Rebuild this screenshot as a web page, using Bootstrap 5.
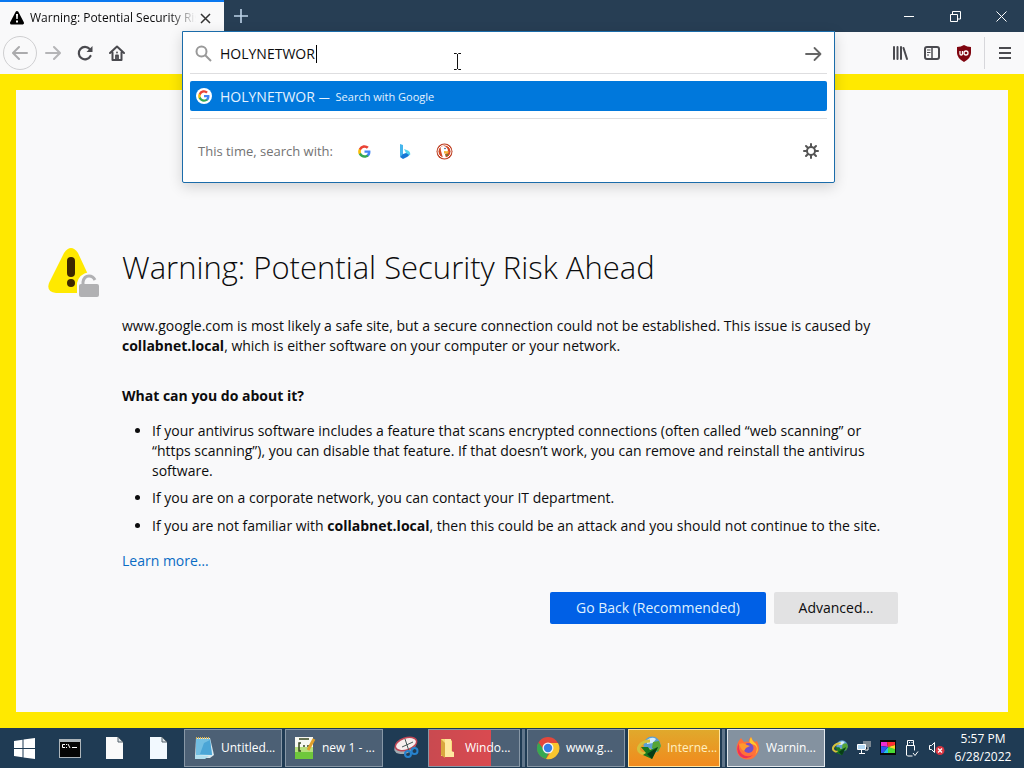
<!DOCTYPE html>
<html lang="en">
<head>
<meta charset="utf-8">
<meta name="viewport" content="width=device-width, initial-scale=1">
<title>Warning: Potential Security Risk Ahead</title>
<link href="https://cdn.jsdelivr.net/npm/bootstrap@5.3.0/dist/css/bootstrap.min.css" rel="stylesheet">
<style>
body{font-family:"Open Sans","Noto Sans",sans-serif;font-size:14px;line-height:20px;color:#0c0c0d;background:#f9f9fa}
svg{display:block;flex:none}
button{border:0;background:none;padding:0;color:inherit}
.titlebar{height:32px;background:#273e54;color:#fff}
.browser-tab{width:224px;background:#f9f9fa;border-top:2px solid #0a78f0;color:#0c0c0d;font-size:12px;padding:2px 8px 0}
.tab-title{width:166px;overflow:hidden;-webkit-mask-image:linear-gradient(90deg,#000 84%,transparent);mask-image:linear-gradient(90deg,#000 84%,transparent)}
.newtab{width:34px}
.winctl{width:46px;display:flex;justify-content:center;align-items:center}
.toolbar{height:42px;background:#f9f9fa;color:#4a4a4f}
.nav-left{width:182px;padding-left:3px}
.nav-right{width:189px;padding-right:3px}
.tool{width:32px;height:34px;display:flex;align-items:center;justify-content:center}
.back{width:34px;border-radius:50%;border:1px solid #cfcfd1;color:#ababad}
.divider{height:32px;border-left:1px solid #d7d7db}
.urlpanel{top:-1px;z-index:5;height:152px;background:#fff;border:1px solid #1b6caa;border-radius:0 0 2px 2px;padding:0 7px;box-shadow:0 4px 14px rgba(0,0,0,.16)}
.urlrow{height:42px;border-bottom:1px solid #dedee0;padding:2px 5px 0}
.urlrow input{border:0;outline:0;background:none;padding:0;font-size:14px;width:96px;color:#0c0c0d}
.caret{width:1px;height:18px;background:#000}
.result{height:30px;margin-top:7px;background:#0078dc;color:#e4f2ff;border-radius:2px;padding:0 6px;font-size:14px;width:100%}
.result span,.result small{padding-top:2px}
.result small{font-size:11px}
.engines{height:63px;margin-top:7px;border-top:1px solid #dedee0;padding:2px 8px 0;color:#737373;font-size:13px}
.engine{width:40px;display:flex;justify-content:center}
.ibeam{left:270px;top:21px}
.warnframe{background:#ffe900;padding:16px}
.warnpage{background:#f9f9fa;padding:156px 110px 86px 32px}
.warnicon{width:74px;padding-top:1px}
.warnpage h1{font-size:31px;line-height:42px;font-weight:300;margin:0 0 28px}
.warnpage p{margin:0}
.warnpage .question{margin-top:30px}
.warnpage ul{padding-left:30px;margin:15px 0}
.warnpage li+li{margin-top:8px}
.warnpage li:nth-child(2){margin-top:7px}
.warnpage a{color:#0a6cc4;text-decoration:none}
.actions{margin-top:21px}
.act{height:32px;font-size:14px;border-radius:2px}
.go{width:216px;background:#0060e6;color:#dff0ff}
.adv{width:124px;background:#e2e2e3}
.taskbar{height:40px;background:#1f3b54;color:#fff;font-size:12px}
.taskbar>*{flex-shrink:0}
.launch{width:44px;display:flex;justify-content:center}
.start{width:48px}
.snip{width:42px}
.task{height:38px;width:98px;background:#4c6075;border:1px solid #8797a6;display:flex;align-items:center;gap:6px;padding-left:8px;margin-right:3px;white-space:nowrap}
.grouped{width:92px;margin-right:7px;box-shadow:2px 0 #1f3b54,5px 0 #60758a}
.explorer{background:linear-gradient(90deg,#c94a50,#d94a50 69%,#4c6075 69%)}
.idm{background:linear-gradient(#e0a92c,#f18a1d);border-color:#ffe5a0;color:#fff0c0}
.current{background:#8492a0;border-color:#e3e9ee}
.trayicon{width:24px;display:flex;justify-content:center}
.clock{width:66px;line-height:18px;font-size:12px}
</style>
</head>
<body class="d-flex flex-column min-vh-100">
<svg width="0" height="0" class="position-absolute" aria-hidden="true">
<defs>
<symbol id="google" viewBox="0 0 24 24"><path fill="#4285f4" d="M23 12.3c0-.9-.1-1.5-.3-2.3H12v4.4h6.2c-.3 1.5-1.1 2.6-2.3 3.5v3h3.8c2.2-2.1 3.3-5 3.3-8.600z"/><path fill="#34a853" d="M12 23.500c3.100 0 5.700-1 7.700-2.800l-3.800-2.900c-1 .7-2.300 1.100-3.900 1.100-3 0-5.500-2-6.400-4.700h-4v3c2 3.800 5.900 6.300 10.400 6.300z"/><path fill="#fbbc05" d="M5.600 14.200a7 7 0 0 1 0-4.400v-3h-4a11.600 11.600 0 0 0 0 10.400z"/><path fill="#ea4335" d="M12 5.100c1.700 0 3.200.6 4.400 1.700l3.400-3.400A11.500 11.500 0 0 0 1.600 6.800l4 3C6.500 7.100 9 5.100 12 5.100z"/></symbol>
<symbol id="idmglobe" viewBox="0 0 24 24"><circle cx="15" cy="9" r="8.500" fill="#5c9fd2"/><path fill="#d8eefb" d="M10 4q5-4 9-1l-3 4-6 1z"/><path fill="#56a536" d="M16 6l6-1 2 5-3 6-6-4z"/><path fill="none" stroke="#d5c13b" stroke-width="3" d="M13 5C4 5-1 12 3 16c3 3 8 1 11-3"/><path fill="#19791f" d="M4 11h7l2 3 8-3-6 12-9-4 3-2z"/><path fill="#073d16" d="M10 18l11-7-6 12z"/></symbol>
</defs></svg>

<header>
<div class="titlebar d-flex">
<div class="browser-tab d-flex align-items-center">
<svg width="18" height="18" viewBox="0 0 18 18"><path d="M9 3.500 14.500 14H3.500z" fill="#000" stroke="#000" stroke-width="3" stroke-linejoin="round"/><path d="M8 5h2l-.3 5H8.300zM8 11.500h2v2H8z" fill="#fff"/></svg>
<span class="tab-title text-nowrap ms-1">Warning: Potential Security Risk Ahead</span>
<button class="ms-1" aria-label="Close tab"><svg width="11" height="11" viewBox="0 0 11 11" stroke="#333" stroke-width="1.500"><path d="M1 1l9 9M10 1l-9 9"/></svg></button>
</div>
<button class="newtab d-flex align-items-center justify-content-center" aria-label="New tab"><svg width="14" height="14" viewBox="0 0 14 14" stroke="#bdd3e8" stroke-width="1.600"><path d="M7 0v14M0 7h14"/></svg></button>
<div class="ms-auto d-flex">
<button class="winctl" aria-label="Minimize"><svg width="10" height="10" stroke="#fff"><path d="M0 5.500h10"/></svg></button>
<button class="winctl" aria-label="Restore"><svg width="11" height="11" fill="none" stroke="#fff"><path d="M.5 3.500h7v7h-7zM2.500 3V.5h8v7.500H8"/></svg></button>
<button class="winctl" aria-label="Close"><svg width="11" height="11" stroke="#fff"><path d="M.5.5l10 10M10.500.5l-10 10"/></svg></button>
</div>
</div>
<nav class="toolbar d-flex">
<div class="nav-left d-flex align-items-center">
<button class="tool back" aria-label="Back"><svg width="16" height="16" viewBox="0 0 16 16" fill="none" stroke="currentColor" stroke-width="2" stroke-linecap="round" stroke-linejoin="round"><path d="M15 8H1.500M7 2L1 8l6 6"/></svg></button>
<button class="tool" aria-label="Forward"><svg width="16" height="16" viewBox="0 0 16 16" fill="none" stroke="#b5b5b7" stroke-width="2" stroke-linecap="round" stroke-linejoin="round"><path d="M1 8h13.500M9 2l6 6-6 6"/></svg></button>
<button class="tool" aria-label="Reload"><svg width="16" height="16" viewBox="0 0 16 16"><path fill="none" stroke="currentColor" stroke-width="2.200" stroke-linecap="round" d="M13.500 11A6.200 6.200 0 1 1 12.700 4"/><path fill="currentColor" d="M15.500 1v6h-6z"/></svg></button>
<button class="tool" aria-label="Home"><svg width="16" height="16" viewBox="0 0 16 16" fill="none" stroke="currentColor" stroke-width="2" stroke-linecap="round" stroke-linejoin="round"><path d="M1 8l7-6.500L15 8M3.500 7.500V15h9V7.500"/><path d="M7 14v-3.500h2V14M8 7.500v.1" stroke-width="1.800"/></svg></button>
</div>
<div class="position-relative flex-grow-1">
<div class="urlpanel position-absolute start-0 end-0">
<div class="urlrow d-flex align-items-center">
<svg width="17" height="17" viewBox="0 0 17 17" fill="none" stroke="#999" stroke-width="2"><circle cx="6.500" cy="6.500" r="5"/><path d="M10 10l6 6"/></svg>
<label for="address" class="visually-hidden">Search or enter address</label>
<input id="address" type="text" value="HOLYNETWOR" class="ms-2"><span class="caret"></span>
<button class="ms-auto" aria-label="Go"><svg width="17" height="16" viewBox="0 0 17 16" fill="none" stroke="#666" stroke-width="1.800" stroke-linecap="round" stroke-linejoin="round"><path d="M1 8h14M9.500 2l6 6-6 6"/></svg></button>
</div>
<button class="result d-flex align-items-center">
<svg width="16" height="16" viewBox="0 0 16 16"><circle cx="8" cy="8" r="8" fill="#fff"/><use href="#google" x="2" y="2" width="12" height="12"/></svg>
<span class="ms-2">HOLYNETWOR</span><small class="ms-1">—&nbsp; Search with Google</small>
</button>
<div class="engines d-flex align-items-center">
<span class="me-2 pe-1">This time, search with:</span>
<button class="engine" aria-label="Google"><svg width="13" height="13"><use href="#google"/></svg></button>
<button class="engine" aria-label="Bing"><svg width="12" height="15" viewBox="0 0 12 15"><path fill="#45b6ed" d="M1 0l3 1v10L1 13z"/><path fill="#1677d5" d="M1 13l3-3 3-1 4 0q-1 3-3 4l-4 2z"/><path fill="#55d4ed" d="M5 5l4 1.500q3 2 2 5L7 9z"/></svg></button>
<button class="engine" aria-label="DuckDuckGo"><svg width="17" height="17" viewBox="0 0 17 17"><circle cx="8.500" cy="8.500" r="8" fill="#bd3d20"/><circle cx="8.500" cy="8.500" r="6.500" fill="#d34a28" stroke="#fff"/><path fill="#fff" d="M4.500 4q5-3 7.500 3l-1 3-2 1 1 4H7L5 8z"/><path fill="#f4b536" d="M8 8l5 .5-1 2H8z"/><path fill="#43933a" d="M9 12l3-1v2z"/><circle cx="9" cy="5.500" r=".8" fill="#2d4f8e"/></svg></button>
<button class="ms-auto" aria-label="Search settings"><svg width="16" height="16" viewBox="0 0 16 16" fill="none" stroke="#555" stroke-width="2"><circle cx="8" cy="8" r="4"/><path stroke-linecap="round" d="M8 1v2.500M8 12.500V15M1 8h2.500M12.500 8H15M3 3l1.800 1.800M11.200 11.200L13 13M13 3l-1.800 1.800M4.800 11.200L3 13"/></svg></button>
</div>
<svg class="ibeam position-absolute" width="9" height="17" fill="none" stroke="#111"><path d="M1 .5h2.500l1 1 1-1H8M4.500 1v15M1 16.500h2.500l1-1 1 1H8"/></svg>
</div>
</div>
<div class="nav-right d-flex align-items-center justify-content-end">
<button class="tool" aria-label="Library"><svg width="16" height="16" viewBox="0 0 16 16" fill="none" stroke="currentColor" stroke-width="2" stroke-linecap="round"><path d="M2 2v12M5.500 2v12M9 2v12M11.500 3l3.500 11"/></svg></button>
<button class="tool" aria-label="Sidebars"><svg width="16" height="16" viewBox="0 0 16 16" fill="none" stroke="currentColor"><rect x="1" y="2" width="14" height="12" rx="2" stroke-width="2"/><path d="M8 2v12" stroke-width="1.500"/><path d="M3 5h3.500M3 7.500h3.500M3 10h2"/></svg></button>
<button class="tool" aria-label="uBlock Origin"><svg width="16" height="17" viewBox="0 0 16 17"><path fill="#800610" d="M8 0q3 2 7 2v6q0 5-7 9-7-4-7-9V2q4 0 7-2z"/><path fill="none" stroke="#fff" stroke-width="1.300" d="M4 6v3q0 1 1.200 1T6.500 9V6"/><circle cx="10" cy="8" r="2" fill="none" stroke="#fff" stroke-width="1.300"/></svg></button>
<div class="divider ms-1"></div>
<button class="tool ms-1" aria-label="Menu"><svg width="12" height="12" stroke="currentColor" stroke-width="1.800"><path d="M0 1h12M0 6h12M0 11h12"/></svg></button>
</div>
</nav>
</header>

<main class="warnframe flex-grow-1 d-flex">
<section class="warnpage flex-grow-1 d-flex">
<div class="warnicon flex-shrink-0"><svg width="52" height="52" viewBox="0 0 52 52"><path fill="#ffe900" d="M16 6q7-10 14 0l14 30q3 9-6 10H8q-10-1-7-10z"/><rect x="19" y="10" width="8" height="20" rx="4" fill="#3e2800"/><circle cx="23" cy="36" r="4" fill="#3e2800"/><path fill="#f9f9fa" d="M29 52V36q2-9 12-11 12 0 11 12v15z"/><rect x="31" y="37" width="20" height="13" rx="2" fill="#b1b1b3"/><path d="M35 38v-3q1-6 6-6 4 0 6 4" fill="none" stroke="#b1b1b3" stroke-width="3"/></svg></div>
<div class="flex-grow-1">
<h1>Warning: Potential Security Risk Ahead</h1>
<p>www.google.com is most likely a safe site, but a secure connection could not be established. This issue is caused by <b>collabnet.local</b>, which is either software on your computer or your network.</p>
<p class="question"><b>What can you do about it?</b></p>
<ul>
<li>If your antivirus software includes a feature that scans encrypted connections (often called “web scanning” or “https scanning”), you can disable that feature. If that doesn’t work, you can remove and reinstall the antivirus software.</li>
<li>If you are on a corporate network, you can contact your IT department.</li>
<li>If you are not familiar with <b>collabnet.local</b>, then this could be an attack and you should not continue to the site.</li>
</ul>
<a href="#">Learn more…</a>
<div class="actions d-flex justify-content-end gap-2"><button class="act go">Go Back (Recommended)</button><button class="act adv">Advanced…</button></div>
</div>
</section>
</main>

<footer class="taskbar d-flex align-items-center">
<button class="launch start" aria-label="Start"><svg width="21" height="21" viewBox="0 0 21 21" fill="#fff"><path d="M0 3l8.500-1.200V10H0zM9.500 1.600L21 0v10H9.500zM0 11h8.500v8.200L0 18zM9.500 11H21v10L9.500 19.400z"/></svg></button>
<button class="launch" aria-label="Command Prompt"><svg width="22" height="19" viewBox="0 0 22 19"><path fill="#aeb6bb" d="M0 0h22v19H0z"/><path fill="#050505" d="M1 3h20v15H1z"/><path stroke="#fff" fill="none" d="M6 5.500H3.500v3H6M7.500 5v1M7.500 8v1M9 5l2 4M13 8.500h5"/></svg></button>
<button class="launch" aria-label="Document 1"><svg width="17" height="22" viewBox="0 0 17 22"><path fill="#fafafa" d="M0 0h12l5 5v17H0z"/><path fill="#dce2e6" stroke="#53616b" d="M12 0v5h5z"/></svg></button>
<button class="launch" aria-label="Document 2"><svg width="17" height="22" viewBox="0 0 17 22"><path fill="#f2f9ff" d="M0 0h12l5 5v17H0z"/><path fill="#dce2e6" stroke="#53616b" d="M12 0v5h5z"/></svg></button>
<button class="task ms-1"><svg width="22" height="24" viewBox="0 0 22 24"><path fill="#d8e8ef" d="M3 2h14l4 17-4 3H2z"/><path fill="#72bee2" d="M3 3h14l2 16H3z"/><path fill="#4ba5d6" d="M11 7l6-3 2 15-12-1z"/><path fill="#b2dfef" d="M2 19l14 1-4 3H2z"/><path stroke="#d5b557" stroke-width="2" stroke-dasharray="1 1" d="M3 2h14"/></svg><span>Untitled...</span></button>
<button class="task"><svg width="22" height="24" viewBox="0 0 22 24"><path fill="#f7f8f1" d="M1 1h18v22H1z"/><path fill="#6fc73b" d="M1 14h18v9H1z"/><path fill="#b6df7c" d="M1 11h18v5H1z"/><path fill="none" stroke="#36441f" stroke-width="1.500" d="M7 7H5v8h2M9 10h2M13 10h2M5 3h10"/><path stroke="#e0a02b" stroke-width="3" d="M20 3l-6 11"/></svg><span>new 1 - ...</span></button>
<button class="launch snip" aria-label="Snipping Tool"><svg width="26" height="24" viewBox="0 0 26 24"><ellipse cx="11" cy="11" rx="11" ry="6.500" transform="rotate(-18 11 11)" fill="#a3acb2"/><ellipse cx="12" cy="8" rx="11" ry="6" transform="rotate(-18 12 8)" fill="#f7eeee" stroke="#bd4555" stroke-width="1.500"/><path stroke="#455" d="M11 3l4 12M8 11l11-5"/><g fill="none" stroke="#2682ce" stroke-width="2"><circle cx="14" cy="18" r="3"/><circle cx="20.500" cy="15" r="3"/></g></svg></button>
<button class="task grouped explorer"><svg width="22" height="22" viewBox="0 0 22 22"><path fill="#f7dc7a" d="M4 2h9l2 2v15H4z"/><path fill="#d9a73e" d="M4 2l4 4v15l-4-3z"/><path fill="#ffe9a0" d="M8 6V2h6v12l3 1v5H8z"/></svg><span>Windo...</span></button>
<button class="task"><svg width="24" height="24" viewBox="0 0 24 24"><circle cx="12" cy="12" r="11" fill="#e2473b"/><path fill="#36a852" d="M2.500 6.500L8 14l5 2-3 7A11 11 0 0 1 2.500 6.500z"/><path fill="#f8c62e" d="M12 7h10a11 11 0 0 1-12 16l6-9z"/><circle cx="12" cy="12" r="5.500" fill="#f5f5f5"/><circle cx="12" cy="12" r="4.200" fill="#347ee5"/></svg><span>www.g...</span></button>
<button class="task grouped idm"><svg width="24" height="24"><use href="#idmglobe"/></svg><span>Interne...</span></button>
<button class="task current"><svg width="24" height="24" viewBox="0 0 24 24"><path fill="#ff7139" d="M5 2l3 4q3-1 5 0-1-3 2-5 1 3 4 5l2-1q4 8 0 13A11 11 0 0 1 1 16Q-1 9 5 2z"/><path fill="#ffc82c" d="M15 1q1 4 5 7 4 6-1 11Q24 9 15 8q-3-2 0-7z"/><path fill="#ee3158" d="M3 7q-1 7 3 11 5 4 11 1-6 6-13 1Q-1 14 3 7z"/><circle cx="12.500" cy="12" r="5" fill="#7650c8"/><path fill="#ff9a2c" d="M3 8q5-2 8 1l3 1-4 2-2 3q-3-1-5-7z"/></svg><span>Warnin...</span></button>
<div class="trayicon"><svg width="16" height="16"><use href="#idmglobe"/></svg></div>
<div class="trayicon"><svg width="16" height="16" viewBox="0 0 16 16"><path fill="#7b8791" d="M7 1h8v6H7z"/><path fill="#b5daf5" stroke="#fff" d="M1.500 4.500h8v5h-8z"/><path stroke="#fff" d="M5.500 10v3M3 13.500h6M12 7v3H9"/></svg></div>
<div class="trayicon"><svg width="16" height="16" viewBox="0 0 16 16"><path fill="#080808" d="M0 0h16v15H0z"/><path fill="#f02bd0" d="M1 2h6l1 5-7-1z"/><path fill="#ff3032" d="M7 2h8v3L8 7z"/><path fill="#ffd62b" d="M15 5v5L8 7z"/><path fill="#49da35" d="M15 9v4H8V7z"/><path fill="#22c4e8" d="M8 7v6H3z"/><path fill="#3154f0" d="M1 6l7 1-5 6H1z"/></svg></div>
<div class="trayicon"><svg width="14" height="17" viewBox="0 0 14 17" fill="none" stroke="#fff"><path d="M2.500 5V.5h6V5M1.500 5.500h8v5M1.500 5.500V15l1 1h5M4 2.500h1M6.500 2.500h1M8 13l2 2.500 3-4"/></svg></div>
<div class="trayicon"><svg width="17" height="16" viewBox="0 0 17 16"><path fill="none" stroke="#fff" d="M1.500 5.500h2l3-3v10l-3-3h-2z"/><circle cx="12" cy="10.500" r="4.500" fill="#d83440"/><path stroke="#fff" stroke-width="1.300" d="M10 8.500l4 4M14 8.500l-4 4"/></svg></div>
<div class="clock text-center ms-auto me-2"><div>5:57 PM</div><div>6/28/2022</div></div>
</footer>
<script src="https://cdn.jsdelivr.net/npm/bootstrap@5.3.0/dist/js/bootstrap.bundle.min.js"></script>
</body>
</html>
